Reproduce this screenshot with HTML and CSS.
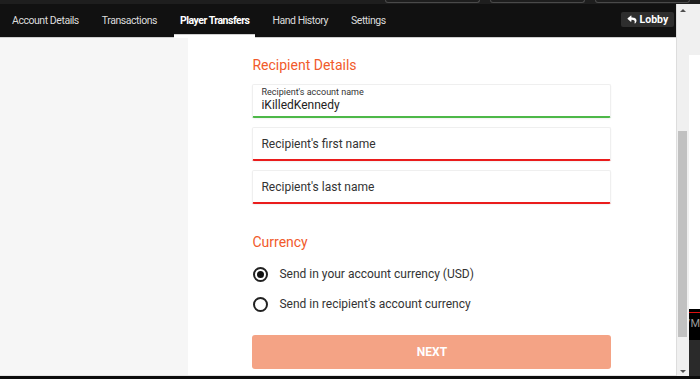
FILE: index.html
```html
<!DOCTYPE html>
<html lang="en">

<head>
  <meta charset="UTF-8">
  <meta name="viewport" content="width=device-width, initial-scale=1.0">
  <title>Player Transfers</title>
  <link rel="stylesheet" href="styles.css">
</head>

<body>
  <div class="top-strip">
    <span class="strip-box"></span>
    <span class="strip-box"></span>
    <span class="strip-box"></span>
  </div>

  <div class="frame">
    <div class="app">
      <nav class="tabs">
        <a href="#" class="tab">Account Details</a>
        <a href="#" class="tab">Transactions</a>
        <a href="#" class="tab active">Player Transfers</a>
        <a href="#" class="tab">Hand History</a>
        <a href="#" class="tab">Settings</a>
        <button class="lobby-button">
          <svg viewBox="0 0 512 512" width="10" height="9">
            <path fill="#fff" d="M8.3 189.8L184.3 37.9C199.7 24.5 224 35.3 224 56v80.1c160.6 1.8 288 34 288 186.3 0 61.4-39.6 122.3-83.3 154.1-13.7 9.9-33.1-2.5-28.1-18.6 45.3-145-21.5-183.5-176.6-185.7V360c0 20.7-24.3 31.5-39.7 18.2l-176-152c-11.1-9.6-11.1-26.8 0-36.4z" />
          </svg>
          Lobby
        </button>
      </nav>

      <div class="content">
        <div class="sidebar"></div>

        <div class="main">
          <form class="transfer-form" onsubmit="return false;">
            <h3 class="section-title">Recipient Details</h3>

            <div class="field valid">
              <label class="field-label" for="accountName">Recipient's account name</label>
              <input class="field-input" id="accountName" type="text" value="iKilledKennedy">
            </div>
            <div class="field invalid">
              <input class="field-input" type="text" placeholder="Recipient's first name">
            </div>
            <div class="field invalid">
              <input class="field-input" type="text" placeholder="Recipient's last name">
            </div>

            <h3 class="section-title currency-title">Currency</h3>

            <label class="radio-row">
              <span class="radio checked"></span>
              Send in your account currency (USD)
            </label>
            <label class="radio-row">
              <span class="radio"></span>
              Send in recipient's account currency
            </label>

            <button class="next-button">NEXT</button>
          </form>
        </div>
      </div>
    </div>

    <div class="scrollbar">
      <span class="arrow-up"></span>
      <div class="thumb"></div>
      <span class="arrow-down"></span>
    </div>

    <div class="peek">
      <div class="peek-top"></div>
      <div class="peek-white"></div>
      <div class="peek-dark"><span>/M</span></div>
      <div class="peek-bottom"></div>
    </div>
  </div>

  <div class="taskbar"></div>
</body>

</html>
```

FILE: styles.css
```css
* {
  box-sizing: border-box;
}

html,
body {
  margin: 0;
  height: 379px;
  overflow: hidden;
}

body {
  font-family: Roboto, Arial, sans-serif;
  background-color: #111;
}

.top-strip {
  height: 4px;
  background-color: #1e1e1e;
  display: flex;
  justify-content: flex-end;
  gap: 10px;
  padding-right: 10px;
}

.strip-box {
  width: 95px;
  height: 3px;
  border: 1px solid #4a4a4a;
  border-top: none;
  border-radius: 0 0 3px 3px;
}

.frame {
  display: flex;
  height: 372px;
}

.app {
  width: 679px;
  display: flex;
  flex-direction: column;
  border-right: 1px solid #ddd;
}

/* nav bar */
.tabs {
  height: 34px;
  background-color: #111;
  border-bottom: 1px solid #cfcfcf;
  display: flex;
  align-items: center;
  padding-left: 6px;
  gap: 11px;
  flex-shrink: 0;
}

.tab {
  position: relative;
  height: 33px;
  line-height: 33px;
  padding: 0 6px;
  color: #dcdcdc;
  font-size: 10.5px;
  letter-spacing: -0.45px;
  text-decoration: none;
}

.tab.active {
  color: #fff;
  font-weight: bold;
  letter-spacing: -0.5px;
}

.tab.active::after {
  content: "";
  position: absolute;
  left: 0;
  right: 0;
  bottom: -1px;
  height: 3px;
  background-color: #fff;
  border-top: 1px solid #cfcfcf;
}

.lobby-button {
  margin-left: auto;
  margin-right: 2px;
  margin-bottom: 2px;
  height: 15px;
  width: 53px;
  display: flex;
  align-items: center;
  justify-content: center;
  gap: 3px;
  padding: 0;
  border: none;
  border-radius: 2px;
  background-color: #2e2e2e;
  color: #fff;
  font-family: Roboto, Arial, sans-serif;
  font-size: 10.5px;
  font-weight: bold;
}

/* content */
.content {
  flex: 1;
  display: flex;
  border-bottom: 1px solid #e4e4e4;
}

.sidebar {
  width: 188px;
  background-color: #f6f6f6;
}

.main {
  flex: 1;
  background-color: #fff;
  display: flex;
  justify-content: center;
}

.transfer-form {
  width: 359px;
  padding-top: 18px;
  display: flex;
  flex-direction: column;
}

.section-title {
  margin: 0;
  font-size: 14px;
  line-height: 18px;
  font-weight: normal;
  color: #f15a2b;
}

.currency-title {
  margin-top: 29px;
}

.field {
  height: 34px;
  margin-top: 9px;
  border: 1px solid #efefef;
  border-bottom: 2px solid #ea1c1c;
  border-radius: 2px;
  box-shadow: 0 1px 2px rgba(0, 0, 0, 0.06);
  padding: 0 8px;
  display: flex;
  flex-direction: column;
  justify-content: center;
}

.field:first-of-type {
  margin-top: 10px;
}

.field.valid {
  border-bottom-color: #4db848;
  justify-content: flex-start;
  padding-top: 2px;
}

.field-label {
  font-size: 9px;
  line-height: 10px;
  color: #333;
}

.field-input {
  border: none;
  outline: none;
  padding: 0;
  margin: 0;
  background: transparent;
  font-family: Roboto, Arial, sans-serif;
  font-size: 12px;
  line-height: 14px;
  height: 14px;
  color: #222;
}

.field.valid .field-input {
  margin-top: 1px;
}

.field-input::placeholder {
  color: #333;
  opacity: 1;
}

.radio-row {
  display: flex;
  align-items: center;
  gap: 11px;
  height: 20px;
  margin-top: 10px;
  padding-left: 1px;
  font-size: 12px;
  color: #333;
}

.radio-row:first-of-type {
  margin-top: 13px;
}

.radio {
  width: 15px;
  height: 15px;
  border: 2px solid #222;
  border-radius: 50%;
  display: flex;
  align-items: center;
  justify-content: center;
}

.radio.checked::after {
  content: "";
  width: 7px;
  height: 7px;
  border-radius: 50%;
  background-color: #111;
}

.next-button {
  margin-top: 21px;
  height: 34px;
  border: none;
  border-radius: 3px;
  background-color: #f4a385;
  color: #fff;
  font-family: Roboto, Arial, sans-serif;
  font-size: 12px;
  font-weight: bold;
}

/* scrollbar */
.scrollbar {
  width: 12px;
  background-color: #f0f0f0;
  display: flex;
  flex-direction: column;
  align-items: center;
  padding: 5px 0 3px;
}

.arrow-up,
.arrow-down {
  width: 0;
  height: 0;
  border-left: 3px solid transparent;
  border-right: 3px solid transparent;
}

.arrow-up {
  border-bottom: 3px solid #505050;
}

.arrow-down {
  border-top: 3px solid #505050;
}

.thumb {
  width: 9px;
  height: 206px;
  margin-top: 119px;
  margin-bottom: auto;
  background-color: #c1c1c1;
}

/* neighbouring window */
.peek {
  flex: 1;
  display: flex;
  flex-direction: column;
}

.peek-top {
  height: 51px;
  background-color: #f0f0f0;
}

.peek-white {
  height: 254px;
  background-color: #fff;
}

.peek-dark {
  height: 31px;
  background-color: #000;
  border-top: 3px solid #000;
  color: #999;
  font-size: 11px;
  overflow: hidden;
  white-space: nowrap;
}

.peek-dark span {
  display: block;
  border-top: 1px solid #e01010;
  padding-top: 4px;
  margin-left: -3px;
}

.peek-bottom {
  flex: 1;
  background-color: #2a2a2a;
}

.taskbar {
  height: 3px;
  background-color: #0c0c0c;
}
```
